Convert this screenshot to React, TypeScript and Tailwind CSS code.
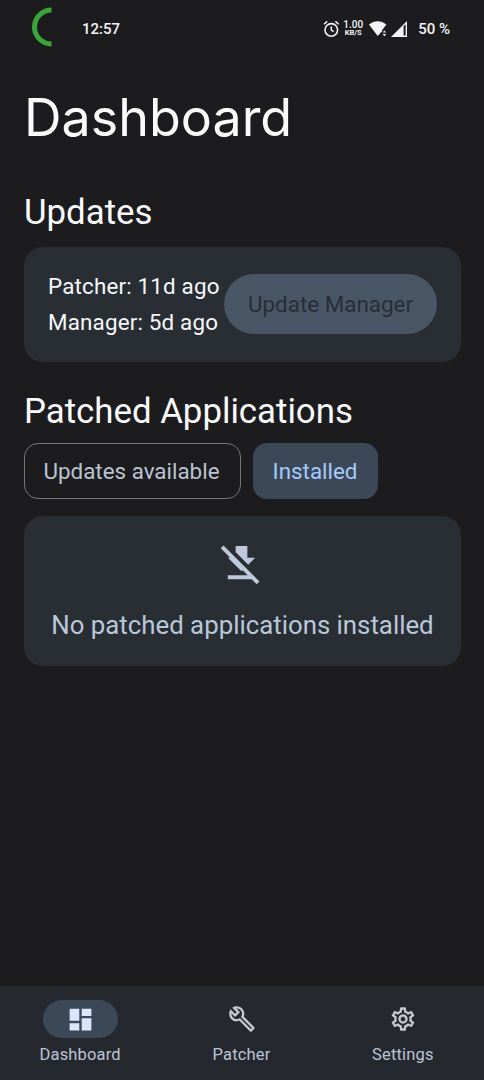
import { ReactNode } from "react"
import clsx from "clsx"
import {
  MdDashboard,
  MdFileDownloadOff,
  MdOutlineBuild,
  MdOutlineSettings,
} from "react-icons/md"

type NavItem = {
  label: string
  icon: ReactNode
  active?: boolean
}

const navItems: NavItem[] = [
  { label: "Dashboard", icon: <MdDashboard size={29} />, active: true },
  { label: "Patcher", icon: <MdOutlineBuild size={28} /> },
  { label: "Settings", icon: <MdOutlineSettings size={28} /> },
]

function StatusBar() {
  return (
    <div className="flex h-14 shrink-0 items-center pl-8 pr-[34px] text-[#f4f4f6]">
      <svg width="20" height="40" viewBox="0 0 20 40" fill="none" className="-mt-0.5">
        <path d="M19.5 3A17 17 0 0 0 19.5 37" stroke="#3aa53a" strokeWidth="5" />
      </svg>
      <span className="ml-[30px] mt-0.5 text-[15px] font-medium leading-5">12:57</span>
      <div className="ml-auto mt-0.5 flex items-center">
        {/* alarm */}
        <svg width="17" height="18" viewBox="0 0 17 18" fill="none" stroke="currentColor">
          <circle cx="8.3" cy="9.9" r="6.3" strokeWidth="1.6" />
          <path d="M8.3 6.4V10l2.4 1.6M1 4.2l3.2-2.8M15.6 4.2l-3.2-2.8" strokeWidth="1.5" />
        </svg>
        <div className="ml-[3px] flex w-[20px] flex-col items-center">
          <span className="text-[10px] font-medium leading-[8px]">1.00</span>
          <span className="text-[7.5px] font-bold leading-[8px]">KB/S</span>
        </div>
        {/* wifi */}
        <svg width="19" height="16" viewBox="0 0 19 16" fill="currentColor" className="ml-[6px]">
          <path d="M0 3.6C5-.9 12.400-.9 17.400 3.600L13.200 9v1L8.700 15z" />
          <path d="M13.600 11.600l1.800-2.200 1.800 2.200zM13.600 13l1.800 2.200 1.800-2.200z" />
        </svg>
        {/* cell signal */}
        <svg width="17" height="16" viewBox="0 0 17 16" fill="currentColor" className="ml-[3px]">
          <path fillRule="evenodd" d="M0 16L16 0v16zM12.600 5.200v9.300h2V3.200z" />
        </svg>
        <span className="ml-[10px] text-[15px] font-medium leading-5">50 %</span>
      </div>
    </div>
  )
}

function UpdatesCard() {
  return (
    <div className="flex h-[115px] items-center justify-between rounded-[19px] bg-[#292e34] px-6">
      <div className="mb-0.5 whitespace-nowrap text-[22.4px] leading-[36px] tracking-[0.17px] text-[#f6f8fb]">
        <p>Patcher: 11d ago</p>
        <p>Manager: 5d ago</p>
      </div>
      <button
        disabled
        className="mb-px h-[60px] w-[213px] shrink-0 whitespace-nowrap rounded-full bg-[#495666] pt-0.5 text-[22.4px] text-[#272e37]"
      >
        Update Manager
      </button>
    </div>
  )
}

function Filters() {
  return (
    <div className="mt-[12px] flex gap-3 text-[22.4px]">
      <button className="h-14 w-[217px] rounded-[14px] border border-[#77777a] pr-0.5 pt-0.5 text-[#bac3d3]">
        Updates available
      </button>
      <button className="h-14 w-[125px] rounded-[14px] bg-[#3b4857] pr-px pt-0.5 text-[#a8c8fb]">
        Installed
      </button>
    </div>
  )
}

function BottomNav() {
  return (
    <nav className="mt-auto grid h-[94px] shrink-0 grid-cols-3 bg-[#25282f] pt-[14px]">
      {navItems.map((item) => (
        <div key={item.label} className="flex flex-col items-center">
          <div
            className={clsx(
              "flex h-[38px] w-[75px] items-center justify-center rounded-full",
              item.active ? "bg-[#3b4857] text-[#d9e6fb]" : "text-[#c5c8cf]"
            )}
          >
            {item.icon}
          </div>
          <span className="mr-px mt-[7px] text-[16.5px] leading-5 tracking-[0.15px] text-[#bcc4d4]">
            {item.label}
          </span>
        </div>
      ))}
    </nav>
  )
}

const App = () => {
  return (
    <div className="flex h-[1080px] w-[484px] flex-col overflow-hidden bg-[#1c1c1e] font-[Roboto,sans-serif]">
      <StatusBar />
      <main className="pl-6 pr-[23px]">
        <h1 className="mt-[30px] font-[Inter,sans-serif] text-[52px] leading-[64px] text-[#fbfbfd]">
          Dashboard
        </h1>
        <h2 className="mt-[42px] text-[34.8px] leading-10 text-[#fbfbfd]">Updates</h2>
        <div className="mt-[15px]">
          <UpdatesCard />
        </div>
        <h2 className="mt-[29px] text-[34.8px] leading-10 text-[#fbfbfd]">
          Patched Applications
        </h2>
        <Filters />
        <div className="mt-[17px] flex h-[150px] flex-col items-center rounded-[19px] bg-[#292e34] pt-[24px]">
          <MdFileDownloadOff size={47} color="#bdc8dc" className="mr-0.5" />
          <p className="mt-[23px] whitespace-nowrap text-[25.8px] leading-[30px] text-[#bac7d9]">
            No patched applications installed
          </p>
        </div>
      </main>
      <BottomNav />
    </div>
  )
}

export default App
